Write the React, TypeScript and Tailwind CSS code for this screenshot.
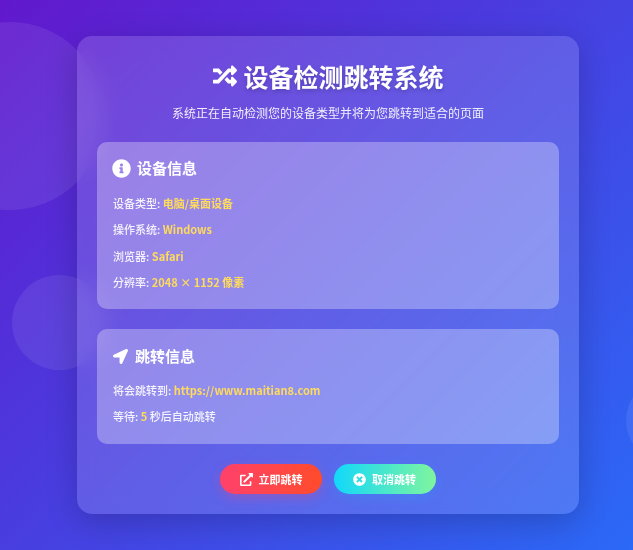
import { FaExternalLinkAlt, FaInfoCircle, FaLocationArrow, FaRandom, FaTimesCircle } from 'react-icons/fa';

const deviceRows = [
  { label: '设备类型:', value: '电脑/桌面设备' },
  { label: '操作系统:', value: 'Windows' },
  { label: '浏览器:', value: 'Safari' },
  { label: '分辨率:', value: '2048 × 1152 像素' }
];

const App = () => (
  <div className="relative h-[550px] w-[633px] overflow-hidden bg-[linear-gradient(135deg,#6218cd,#2b69f6)] font-['Noto_Sans_CJK_SC','Noto_Sans',sans-serif] text-white">
    <div className="absolute left-[-84px] top-[22px] h-[188px] w-[188px] rounded-full bg-white/[0.08]" />
    <div className="absolute left-[12px] top-[275px] h-[95px] w-[95px] rounded-full bg-white/[0.08]" />
    <div className="absolute left-[626px] top-[378px] h-[85px] w-[85px] rounded-full bg-white/[0.08]" />

    <div className="flex h-full items-center pl-[77px]">
      <main className="relative h-[478px] w-[502px] rounded-[15px] bg-white/15 p-5 shadow-[0_8px_32px_rgba(0,0,0,0.2)] backdrop-blur-[10px]">
        <h1 className="mt-[2px] flex h-[36px] items-center justify-center gap-[5px] text-[25px] leading-none font-bold [text-shadow:0_2px_4px_rgba(0,0,0,0.2)]">
          <FaRandom className="h-[24px] w-[26px]" />
          设备检测跳转系统
        </h1>
        <p className="mt-[9px] h-[20px] text-center text-[12px] leading-[20px] text-white/90">
          系统正在自动检测您的设备类型并将为您跳转到适合的页面
        </p>

        <section className="mt-[19px] h-[167px] rounded-[10px] bg-white/30 px-4 py-[14px]">
          <h2 className="flex h-[24px] items-center gap-[6px] text-[15px] font-bold">
            <FaInfoCircle className="-ml-px h-[19px] w-[19px]" />
            设备信息
          </h2>
          <div className="mt-[10px] flex flex-col">
            {deviceRows.map((row) => (
              <div key={row.label} className="h-[26.3px] text-[11px] leading-[26.3px] font-medium text-white/90">
                {row.label} <span className="font-bold text-[#ffdb5c]">{row.value}</span>
              </div>
            ))}
          </div>
        </section>

        <section className="mt-[20px] h-[115px] rounded-[10px] bg-white/30 px-4 py-[15px]">
          <h2 className="flex h-[24px] items-center gap-[7px] text-[15px] font-bold">
            <FaLocationArrow className="h-[15px] w-[15px]" />
            跳转信息
          </h2>
          <div className="mt-[9px] flex flex-col">
            <div className="h-[26.3px] text-[11px] leading-[26.3px] font-medium text-white/90">
              将会跳转到: <span className="font-bold text-[#ffdb5c]">https://www.maitian8.com</span>
            </div>
            <div className="h-[26.3px] text-[11px] leading-[26.3px] font-medium text-white/90">
              等待: <span className="font-bold text-[#ffdb5c]">5</span> 秒后自动跳转
            </div>
          </div>
        </section>

        <div className="mt-[20px] flex justify-center gap-3">
          <button className="flex h-[30px] w-[102px] items-center justify-center gap-[6px] rounded-full bg-[linear-gradient(90deg,#ff416c,#ff4b2b)] text-[11px] font-bold shadow-[0_4px_12px_rgba(255,65,108,0.3)]">
            <FaExternalLinkAlt className="h-[13px] w-[13px]" />
            立即跳转
          </button>
          <button className="flex h-[30px] w-[102px] items-center justify-center gap-[6px] rounded-full bg-[linear-gradient(90deg,#12d8fa,#7ff59e)] text-[11px] font-bold shadow-[0_4px_12px_rgba(0,198,255,0.15)]">
            <FaTimesCircle className="-ml-px h-[13px] w-[13px]" />
            取消跳转
          </button>
        </div>
      </main>
    </div>
  </div>
);

export default App;
